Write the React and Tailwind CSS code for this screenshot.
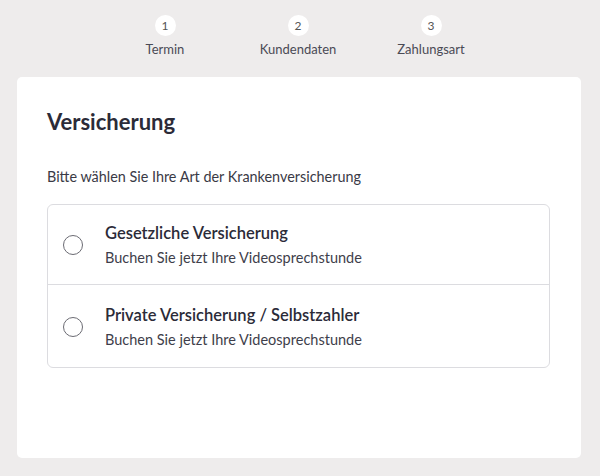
const FONT = { fontFamily: '"Source Sans Pro", Lato, "Noto Sans", sans-serif' };

const steps = [
  { n: 1, label: "Termin" },
  { n: 2, label: "Kundendaten" },
  { n: 3, label: "Zahlungsart" },
];

const options = [
  { title: "Gesetzliche Versicherung", sub: "Buchen Sie jetzt Ihre Videosprechstunde" },
  { title: "Private Versicherung / Selbstzahler", sub: "Buchen Sie jetzt Ihre Videosprechstunde" },
];

export default function App() {
  return (
    <div className="w-[600px] h-[476px] bg-[#eeecec] flex flex-col pl-[17px] pr-[19px] pb-[18px] text-[#2e2e3c]" style={FONT}>
      <div className="flex justify-center pt-[15px] pr-[2px] h-[77px]">
        {steps.map((s) => (
          <div key={s.n} className="w-[133px] flex flex-col items-center">
            <div className="w-[21px] h-[21px] rounded-full bg-white flex items-center justify-center text-[12px] text-[#555]">
              {s.n}
            </div>
            <div className="mt-[5px] text-[13px] leading-[16px] text-[#4a4a55]">{s.label}</div>
          </div>
        ))}
      </div>
      <div className="flex-1 bg-white rounded-[5px] pl-[30px] pr-[31px] pt-[31px]">
        <h2 className="text-[22px] leading-[28px] font-bold text-[#2b2b38]">Versicherung</h2>
        <p className="mt-[32px] text-[14.4px] leading-[18px] text-[#3a3a46]">
          Bitte wählen Sie Ihre Art der Krankenversicherung
        </p>
        <div className="mt-[18px] border border-[#dcdce0] rounded-[6px]">
          {options.map((o, i) => (
            <label
              key={o.title}
              className={
                "flex items-center pl-[15px] cursor-pointer " +
                (i > 0 ? "border-t border-[#dcdce0] h-[83px] pt-[2px]" : "h-[79px] pt-[1px]")
              }
            >
              <span className="w-[20px] h-[20px] rounded-full border border-[#6b6b73] bg-white shrink-0" />
              <span className="ml-[22px] flex flex-col">
                <span className="text-[16.5px] leading-[20px] font-semibold text-[#2b2b38]">{o.title}</span>
                <span className="mt-[6px] text-[14.5px] leading-[18px] text-[#3e3e4a]">{o.sub}</span>
              </span>
            </label>
          ))}
        </div>
      </div>
    </div>
  );
}
